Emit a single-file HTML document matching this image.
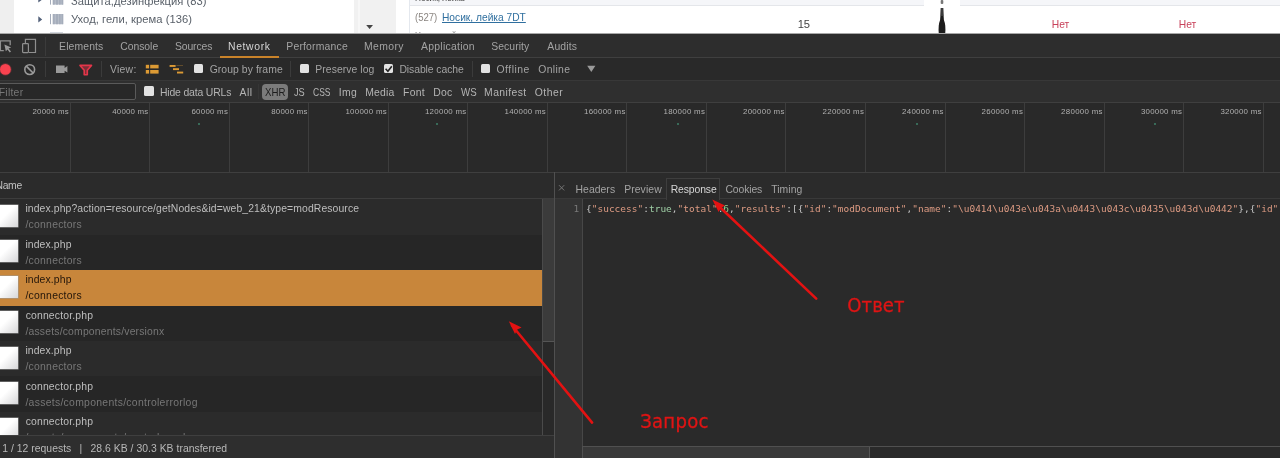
<!DOCTYPE html>
<html lang="ru">
<head>
<meta charset="utf-8">
<title>DevTools Network — Запрос / Ответ</title>
<style>
html,body{margin:0;padding:0}
body{width:1280px;height:458px;overflow:hidden;position:relative;background:#2a2a2a;font-family:"Liberation Sans",sans-serif;font-size:10.4px}
div,i,span,svg{position:absolute;display:block}
.t{white-space:pre;line-height:0}
.t span{position:static;display:inline}
/* ---------- page behind devtools ---------- */
#page{left:0;top:0;width:1280px;height:34px;background:#fff;overflow:hidden}
#pgt{left:0;top:0;width:1280px;height:33px;overflow:hidden;will-change:transform}
#page .strip{left:0;top:0;width:14px;height:34px;background:#efefef}
#page .sb{left:354px;top:0;width:42px;height:34px;background:#f1f1f1}
#page .sb b{position:absolute;left:4px;top:0;width:2px;height:34px;background:#f7f7f7}
#page .th{left:409px;top:0;width:871px;height:5px;background:#f5f6f9;border-bottom:1px solid #e4e6ea}
#page .tl{left:409px;top:0;width:1px;height:34px;background:#e4e8ee}
#page .edge{left:0;top:33px;width:1280px;height:1px;background:#a8a8a8}
/* ---------- devtools ---------- */
#dt{left:0;top:34px;width:1280px;height:424px;background:#2a2a2a;overflow:hidden}
#all{left:0;top:0;width:1280px;height:458px;overflow:hidden;pointer-events:none;will-change:transform}
.bar{left:0;width:1280px}
#tabs{top:34px;height:23px;background:#2d2d2d;border-bottom:1px solid #3f3f3f}
#tool{top:58px;height:22px;background:#292929;border-bottom:1px solid #383838}
#filt{top:81px;height:21px;background:#2f2f2f;border-bottom:1px solid #3f3f3f}
#time{top:103px;height:69px;background:#292929;border-bottom:1px solid #3f3f3f}
.g{top:103px;width:1px;height:69px;background:#3d3d3d}
.dot{width:2px;height:2px;background:#3f8068;border-radius:1px}
.vd{width:1px;background:#3b3b3b}
.cb{width:9.4px;height:9.4px;background:#e2e2e2;border-radius:1.5px}
#und{left:220px;top:56px;width:59px;height:2px;background:#c9832a}
#finp{left:-4px;top:83px;width:138px;height:15px;border:1px solid #5a5a5a;border-radius:2px;background:#282828}
#xhr{left:262px;top:83.5px;width:26px;height:16.5px;background:#7b7b7b;border-radius:4px}
/* left list */
#lhead{left:0;top:173px;width:554px;height:25px;background:#2b2b2b;border-bottom:1px solid #3d3d3d}
.row{left:0;width:542px;height:35.45px;background:#262626}
.row.odd{background:#2b2b2b}
.row.sel{background:#c8863b}
.ic{left:-4px;top:5.6px;width:22px;height:22px;background:linear-gradient(135deg,#fff 0%,#fff 45%,#d6d6d8 100%);box-shadow:0 0 0 .5px #9a9a9a}
#rowt{left:0;top:0;width:542px;height:436px;overflow:hidden;will-change:transform}
#vsb{left:542px;top:199px;width:12px;height:237px;background:#292929;border-left:1px solid #4a4a4a}
#vsb i{left:0;top:0;width:11px;height:142px;background:#3b3b3b;border-bottom:1px solid #555}
#split{left:554px;top:172px;width:1px;height:286px;background:#505050}
#stat{left:0;top:435px;width:554px;height:23px;background:#2e2e2e;border-top:1px solid #3f3f3f}
/* right */
#rhead{left:555px;top:173px;width:725px;height:25px;background:#2b2b2b;border-bottom:1px solid #393939}
#rtab{left:666px;top:178px;width:52px;height:21px;border:1px solid #3e3e3e;border-bottom:0;background:#2a2a2a}
#gut{left:555px;top:199px;width:27px;height:259px;background:#333;border-right:1px solid #474747}
#hsb{left:582px;top:446px;width:698px;height:12px;background:#2a2a2a;border-top:1px solid #505050}
#hsb i{left:0;top:0;width:286px;height:12px;background:#393939;border-right:1px solid #555;border-left:1px solid #505050}
</style>
</head>
<body>
<div id="page">
  <i class="strip"></i>
  <div class="sb"><b></b></div>
  <i class="th"></i><i class="tl"></i>
  <svg width="1280" height="34" viewBox="0 0 1280 34" style="left:0;top:0"><defs><filter id="bl" x="-50%" y="-20%" width="200%" height="140%"><feGaussianBlur stdDeviation="0.5"/></filter></defs>
    <!-- tree arrows -->
    <path d="M38.3 -3.5 L42.2 -0.4 L38.3 2.6Z M38.3 16.3 L42.2 19.4 L38.3 22.5Z" fill="#53617a"/>
    <!-- barcode-like icons -->
    <g fill="#a5adbb">
      <rect x="50" y="-6" width="1" height="10.6"/><rect x="52.6" y="-6" width="10.6" height="10.6" opacity=".82"/><rect x="53" y="-6" width="1.6" height="10.6"/><rect x="56" y="-6" width="2" height="10.6"/><rect x="59" y="-6" width="1.6" height="10.6"/><rect x="61.6" y="-6" width="1.6" height="10.6"/>
      <rect x="50" y="14" width="1" height="10.2"/><rect x="52.6" y="14" width="10.6" height="10.2" opacity=".82"/><rect x="53" y="14" width="1.6" height="10.2"/><rect x="56" y="14" width="2" height="10.2"/><rect x="59" y="14" width="1.6" height="10.2"/><rect x="61.6" y="14" width="1.6" height="10.2"/>
      <rect x="50" y="32.3" width="13" height="2" opacity=".7"/>
    </g>
    <path d="M366.2 24.9 L373 24.9 L369.6 28.9Z" fill="#444"/>
    <!-- product thumbnail -->
    <rect x="924" y="0" width="36" height="6" fill="#fff"/><rect x="940.7" y="0" width="2.6" height="4" rx="1" fill="#777"/>
    <g filter="url(#bl)"><path d="M940.9 8 L943.1 8 L943.9 20 Q946 25 945.2 34 L938.8 34 Q938 25 940.1 20Z" fill="#1c1a1a"/><rect x="940.4" y="8" width="3.2" height="8" fill="#555" opacity=".55"/></g>
  </svg>
  <i class="edge"></i>
</div>
<div id="pgt">
<span class="t" style="left:70.95px;top:1px;font-size:11.2px;letter-spacing:0.036px;color:#596069;">Защита,дезинфекция (83)</span>
<span class="t" style="left:70.95px;top:19px;font-size:11.2px;letter-spacing:0.055px;color:#596069;">Уход, гели, крема (136)</span>
<span class="t" style="left:415.3px;top:-2px;font-size:9.5px;letter-spacing:0px;color:#444;transform:scaleX(0.8643);transform-origin:0 50%;">Носик, лейка</span>
<span class="t" style="left:414.87px;top:17px;font-size:10.6px;letter-spacing:0px;color:#8a8580;transform:scaleX(0.9011);transform-origin:0 50%;">(527)</span>
<span class="t" style="left:441.85px;top:17px;font-size:11.2px;letter-spacing:0px;color:#2f6f9f;text-decoration:underline;transform:scaleX(0.9125);transform-origin:0 50%;">Носик, лейка 7DT</span>
<span class="t" style="left:415.3px;top:35px;font-size:9.5px;letter-spacing:0px;color:#666;transform:scaleX(0.8643);transform-origin:0 50%;">Носик, лейка</span>
<span class="t" style="left:797.7px;top:24px;font-size:11.2px;letter-spacing:-0.2px;color:#444;">15</span>
<span class="t" style="left:1051.7px;top:25px;font-size:10.3px;letter-spacing:0.025px;color:#c8415a;">Нет</span>
<span class="t" style="left:1178.7px;top:25px;font-size:10.3px;letter-spacing:0.025px;color:#c8415a;">Нет</span>
</div>
<div id="tabs" class="bar"></div>
<div id="tool" class="bar"></div>
<div id="filt" class="bar"></div>
<div id="time" class="bar"></div>
<i class="g" style="left:69.80px"></i><i class="g" style="left:149.32px"></i><i class="g" style="left:228.84px"></i><i class="g" style="left:308.36px"></i><i class="g" style="left:387.88px"></i><i class="g" style="left:467.40px"></i><i class="g" style="left:546.92px"></i><i class="g" style="left:626.44px"></i><i class="g" style="left:705.96px"></i><i class="g" style="left:785.48px"></i><i class="g" style="left:865.00px"></i><i class="g" style="left:944.52px"></i><i class="g" style="left:1024.04px"></i><i class="g" style="left:1103.56px"></i><i class="g" style="left:1183.08px"></i><i class="g" style="left:1262.60px"></i>
<i class="dot" style="left:197.5px;top:123px"></i><i class="dot" style="left:436px;top:123px"></i><i class="dot" style="left:677px;top:123px"></i><i class="dot" style="left:915.5px;top:123px"></i><i class="dot" style="left:1154.3px;top:123px"></i>
<i id="und"></i>
<i class="vd" style="left:45px;top:37px;height:19px"></i>
<i class="vd" style="left:45px;top:61px;height:16px"></i>
<i class="vd" style="left:101px;top:61px;height:16px"></i>
<i class="vd" style="left:290px;top:61px;height:16px"></i>
<i class="vd" style="left:471.5px;top:61px;height:16px"></i>
<i class="vd" style="left:258px;top:84px;height:15px;background:#363636"></i>
<i class="cb" style="left:193.7px;top:64px"></i>
<i class="cb" style="left:300.1px;top:64px"></i>
<i class="cb" style="left:383.8px;top:64px"></i>
<i class="cb" style="left:480.6px;top:64px"></i>
<i class="cb" style="left:144.3px;top:86.3px"></i>
<div id="finp"></div>
<i id="xhr"></i>
<svg id="icons" width="620" height="50" viewBox="0 33 620 50" style="left:0;top:33px">
  <!-- inspect -->
  <path d="M10.2 45.2 V40.9 H0.4 V50.6 H3.8" fill="none" stroke="#8f8f8f" stroke-width="1.3"/>
  <path d="M4.4 44.6 L11.2 47.6 L8.6 48.5 L11 51.6 L9.8 52.4 L7.5 49.4 L5.8 51.3Z" fill="#9a9a9a"/>
  <!-- device -->
  <path d="M25.4 43.5 V39.4 H35.5 V52.5 H28.8" fill="none" stroke="#8f8f8f" stroke-width="1.2"/>
  <rect x="22.6" y="43.6" width="5.8" height="9" rx=".8" fill="none" stroke="#8f8f8f" stroke-width="1.2"/>
  <!-- record -->
  <circle cx="5.4" cy="69.4" r="6.3" fill="#f8404e" opacity=".25"/><circle cx="5.4" cy="69.4" r="5.4" fill="#f8424f"/>
  <!-- clear -->
  <circle cx="29.7" cy="69.6" r="4.9" fill="none" stroke="#9a9a9a" stroke-width="1.6"/>
  <path d="M26.3 66.2 L33.1 73" stroke="#9a9a9a" stroke-width="1.7"/>
  <!-- camera -->
  <path d="M56 65.5 H64.6 V67.9 L67.4 66 V72.6 L64.6 70.7 V73 H56Z" fill="#9a9a9a"/>
  <!-- filter -->
  <path d="M80 65.4 H91.5 L87.3 70.2 V74.8 H84.2 V70.2Z" fill="#e3364a" fill-opacity=".45" stroke="#e3364a" stroke-width="1.6" stroke-linejoin="round"/>
  <!-- large rows -->
  <g fill="#dc9a34"><rect x="145.8" y="64.8" width="3.3" height="3.6"/><rect x="150.2" y="64.8" width="8.4" height="3.6"/><rect x="145.8" y="70" width="3.3" height="3.6"/><rect x="150.2" y="70" width="8.4" height="3.6"/></g>
  <!-- waterfall -->
  <g fill="#dc9a34"><rect x="169.6" y="65" width="6" height="1.9"/><rect x="173" y="68.2" width="6" height="1.9"/><rect x="177" y="71.6" width="6.2" height="1.9"/><rect x="176.4" y="65" width="6.6" height=".7" opacity=".45"/></g>
  <!-- check -->
  <path d="M385.6 68.8 L387.9 71.3 L391.8 66.2" fill="none" stroke="#222" stroke-width="1.6"/>
  <!-- dropdown -->
  <path d="M587.2 65.7 H595.4 L591.3 71.9Z" fill="#9a9a9a"/>
</svg>
<div id="lhead"></div>
<div class="row odd" style="top:199px;height:36px"><i class="ic" style="top:5.8px"></i></div>
<div class="row" style="top:235px;height:35px"><i class="ic" style="top:5.3px"></i></div>
<div class="row sel" style="top:270px;height:36px"><i class="ic" style="top:5.8px"></i></div>
<div class="row" style="top:306px;height:35px"><i class="ic" style="top:5.2px"></i></div>
<div class="row odd" style="top:341px;height:35px"><i class="ic" style="top:5.6px"></i></div>
<div class="row" style="top:376px;height:36px"><i class="ic" style="top:6.1px"></i></div>
<div class="row odd" style="top:412px;height:35px"><i class="ic" style="top:5.6px"></i></div>
<div id="rowt">
<span class="t" style="left:25.4px;top:209px;font-size:10.4px;letter-spacing:0.106px;color:#bebebe;">index.php?action=resource/getNodes&amp;id=web_21&amp;type=modResource</span>
<span class="t" style="left:25.45px;top:225px;font-size:10.4px;letter-spacing:0.255px;color:#777777;">/connectors</span>
<span class="t" style="left:25.4px;top:245px;font-size:10.4px;letter-spacing:0.119px;color:#bebebe;">index.php</span>
<span class="t" style="left:25.45px;top:261px;font-size:10.4px;letter-spacing:0.255px;color:#777777;">/connectors</span>
<span class="t" style="left:25.4px;top:280px;font-size:10.4px;letter-spacing:0.119px;color:#22150a;">index.php</span>
<span class="t" style="left:25.45px;top:296px;font-size:10.4px;letter-spacing:0.255px;color:#22150a;">/connectors</span>
<span class="t" style="left:25.65px;top:316px;font-size:10.4px;letter-spacing:0.175px;color:#bebebe;">connector.php</span>
<span class="t" style="left:25.45px;top:332px;font-size:10.4px;letter-spacing:0.185px;color:#777777;">/assets/components/versionx</span>
<span class="t" style="left:25.4px;top:351px;font-size:10.4px;letter-spacing:0.119px;color:#bebebe;">index.php</span>
<span class="t" style="left:25.45px;top:367px;font-size:10.4px;letter-spacing:0.255px;color:#777777;">/connectors</span>
<span class="t" style="left:25.65px;top:387px;font-size:10.4px;letter-spacing:0.175px;color:#bebebe;">connector.php</span>
<span class="t" style="left:25.45px;top:403px;font-size:10.4px;letter-spacing:0.294px;color:#777777;">/assets/components/controlerrorlog</span>
<span class="t" style="left:25.65px;top:422px;font-size:10.4px;letter-spacing:0.175px;color:#bebebe;">connector.php</span>
<span class="t" style="left:25.45px;top:438px;font-size:10.4px;letter-spacing:0.294px;color:#777777;">/assets/components/controlerrorlog</span>
</div>
<div id="vsb"><i></i></div>
<div id="stat"></div>
<div id="rhead"></div>
<div id="rtab"></div>
<div id="gut"></div>
<div id="hsb"><i></i></div>
<i id="split"></i>
<svg width="14" height="14" viewBox="0 0 14 14" style="left:555px;top:181px"><path d="M4 4.2 L9.2 9.4 M9.2 4.2 L4 9.4" stroke="#767676" stroke-width="1" fill="none"/></svg>
<div id="all">
<span class="t" style="left:59.1px;top:47px;font-size:10.4px;letter-spacing:0.129px;color:#a3a3a3;">Elements</span>
<span class="t" style="left:120.25px;top:47px;font-size:10.4px;letter-spacing:-0.033px;color:#a3a3a3;">Console</span>
<span class="t" style="left:174.95px;top:47px;font-size:10.4px;letter-spacing:-0.117px;color:#a3a3a3;">Sources</span>
<span class="t" style="left:228.1px;top:47px;font-size:10.4px;letter-spacing:0.617px;color:#d6d6d6;">Network</span>
<span class="t" style="left:286.3px;top:47px;font-size:10.4px;letter-spacing:0.19px;color:#a3a3a3;">Performance</span>
<span class="t" style="left:364.1px;top:47px;font-size:10.4px;letter-spacing:0.36px;color:#a3a3a3;">Memory</span>
<span class="t" style="left:421.05px;top:47px;font-size:10.4px;letter-spacing:0.27px;color:#a3a3a3;">Application</span>
<span class="t" style="left:491.15px;top:47px;font-size:10.4px;letter-spacing:0.079px;color:#a3a3a3;">Security</span>
<span class="t" style="left:547.35px;top:47px;font-size:10.4px;letter-spacing:0.15px;color:#a3a3a3;">Audits</span>
<span class="t" style="left:110.0px;top:70px;font-size:10.4px;letter-spacing:0.263px;color:#a3a3a3;">View:</span>
<span class="t" style="left:209.65px;top:70px;font-size:10.4px;letter-spacing:0.069px;color:#a3a3a3;">Group by frame</span>
<span class="t" style="left:315.3px;top:70px;font-size:10.4px;letter-spacing:0.064px;color:#a3a3a3;">Preserve log</span>
<span class="t" style="left:399.4px;top:70px;font-size:10.4px;letter-spacing:-0.071px;color:#a3a3a3;">Disable cache</span>
<span class="t" style="left:496.55px;top:70px;font-size:10.4px;letter-spacing:0.492px;color:#a3a3a3;">Offline</span>
<span class="t" style="left:538.35px;top:70px;font-size:10.4px;letter-spacing:0.31px;color:#a3a3a3;">Online</span>
<span class="t" style="left:-1.3px;top:93px;font-size:10.4px;letter-spacing:0.26px;color:#777;">Filter</span>
<span class="t" style="left:159.9px;top:93px;font-size:10.4px;letter-spacing:-0.146px;color:#b4b4b4;">Hide data URLs</span>
<span class="t" style="left:239.45px;top:93px;font-size:10.4px;letter-spacing:0.575px;color:#b4b4b4;">All</span>
<span class="t" style="left:293.98px;top:93px;font-size:10.4px;letter-spacing:0px;color:#b4b4b4;transform:scaleX(0.887);transform-origin:0 50%;">JS</span>
<span class="t" style="left:313.34px;top:93px;font-size:10.4px;letter-spacing:0px;color:#b4b4b4;transform:scaleX(0.8171);transform-origin:0 50%;">CSS</span>
<span class="t" style="left:338.85px;top:93px;font-size:10.4px;letter-spacing:0.325px;color:#b4b4b4;">Img</span>
<span class="t" style="left:365.3px;top:93px;font-size:10.4px;letter-spacing:0.162px;color:#b4b4b4;">Media</span>
<span class="t" style="left:403.1px;top:93px;font-size:10.4px;letter-spacing:0.283px;color:#b4b4b4;">Font</span>
<span class="t" style="left:433.3px;top:93px;font-size:10.4px;letter-spacing:0.225px;color:#b4b4b4;">Doc</span>
<span class="t" style="left:460.82px;top:93px;font-size:10.4px;letter-spacing:0px;color:#b4b4b4;transform:scaleX(0.9344);transform-origin:0 50%;">WS</span>
<span class="t" style="left:484.1px;top:93px;font-size:10.4px;letter-spacing:0.414px;color:#b4b4b4;">Manifest</span>
<span class="t" style="left:534.65px;top:93px;font-size:10.4px;letter-spacing:0.525px;color:#b4b4b4;">Other</span>
<span class="t" style="left:265.02px;top:93px;font-size:10.4px;letter-spacing:0px;color:#1c1c1c;transform:scaleX(0.9294);transform-origin:0 50%;">XHR</span>
<span class="t" style="left:32.45px;top:112px;font-size:7.9px;letter-spacing:0.243px;color:#b0b0b0;">20000 ms</span>
<span class="t" style="left:112.22px;top:112px;font-size:7.9px;letter-spacing:0.207px;color:#b0b0b0;">40000 ms</span>
<span class="t" style="left:191.49px;top:112px;font-size:7.9px;letter-spacing:0.243px;color:#b0b0b0;">60000 ms</span>
<span class="t" style="left:271.26px;top:112px;font-size:7.9px;letter-spacing:0.207px;color:#b0b0b0;">80000 ms</span>
<span class="t" style="left:345.43px;top:112px;font-size:7.9px;letter-spacing:0.287px;color:#b0b0b0;">100000 ms</span>
<span class="t" style="left:424.95px;top:112px;font-size:7.9px;letter-spacing:0.287px;color:#b0b0b0;">120000 ms</span>
<span class="t" style="left:504.47px;top:112px;font-size:7.9px;letter-spacing:0.287px;color:#b0b0b0;">140000 ms</span>
<span class="t" style="left:583.99px;top:112px;font-size:7.9px;letter-spacing:0.287px;color:#b0b0b0;">160000 ms</span>
<span class="t" style="left:663.51px;top:112px;font-size:7.9px;letter-spacing:0.287px;color:#b0b0b0;">180000 ms</span>
<span class="t" style="left:743.03px;top:112px;font-size:7.9px;letter-spacing:0.287px;color:#b0b0b0;">200000 ms</span>
<span class="t" style="left:822.55px;top:112px;font-size:7.9px;letter-spacing:0.287px;color:#b0b0b0;">220000 ms</span>
<span class="t" style="left:902.07px;top:112px;font-size:7.9px;letter-spacing:0.287px;color:#b0b0b0;">240000 ms</span>
<span class="t" style="left:981.59px;top:112px;font-size:7.9px;letter-spacing:0.287px;color:#b0b0b0;">260000 ms</span>
<span class="t" style="left:1061.11px;top:112px;font-size:7.9px;letter-spacing:0.287px;color:#b0b0b0;">280000 ms</span>
<span class="t" style="left:1140.88px;top:112px;font-size:7.9px;letter-spacing:0.256px;color:#b0b0b0;">300000 ms</span>
<span class="t" style="left:1220.4px;top:112px;font-size:7.9px;letter-spacing:0.256px;color:#b0b0b0;">320000 ms</span>
<span class="t" style="left:-4.6px;top:186px;font-size:10.4px;letter-spacing:-0.283px;color:#c0c0c0;">Name</span>
<span class="t" style="left:2.3px;top:449px;font-size:10.4px;letter-spacing:0.014px;color:#b8b8b8;">1 / 12 requests</span>
<span class="t" style="left:79.45px;top:449px;font-size:10.4px;letter-spacing:0px;color:#b8b8b8;">|</span>
<span class="t" style="left:90.55px;top:449px;font-size:10.4px;letter-spacing:0.025px;color:#b8b8b8;">28.6 KB / 30.3 KB transferred</span>
<span class="t" style="left:575.5px;top:190px;font-size:10.4px;letter-spacing:0.05px;color:#a3a3a3;">Headers</span>
<span class="t" style="left:624.2px;top:190px;font-size:10.4px;letter-spacing:0.083px;color:#a3a3a3;">Preview</span>
<span class="t" style="left:670.7px;top:190px;font-size:10.4px;letter-spacing:-0.107px;color:#d6d6d6;">Response</span>
<span class="t" style="left:725.45px;top:190px;font-size:10.4px;letter-spacing:-0.117px;color:#a3a3a3;">Cookies</span>
<span class="t" style="left:771.2px;top:190px;font-size:10.4px;letter-spacing:0.07px;color:#a3a3a3;">Timing</span>
<span class="t" style="left:573.4px;top:209px;font-size:9.45px;letter-spacing:0px;color:#7a7a7a;font-family:'DejaVu Sans Mono', 'Liberation Mono', monospace;">1</span>
<span class="t" style="left:847.35px;top:305px;font-size:20.1px;letter-spacing:0.025px;color:#e01414;font-family:'DejaVu Sans Condensed', 'DejaVu Sans', sans-serif;-webkit-text-stroke:.3px #e01414;">Ответ</span>
<span class="t" style="left:640.15px;top:421px;font-size:20.1px;letter-spacing:0.27px;color:#e01414;font-family:'DejaVu Sans Condensed', 'DejaVu Sans', sans-serif;-webkit-text-stroke:.3px #e01414;">Запрос</span>
<div class="t code" style="left:586.0px;top:209px;font-family:'DejaVu Sans Mono','Liberation Mono',monospace;font-size:9.45px;letter-spacing:0.0381px"><span style="color:#c8c8c8">{</span><span style="color:#dc9a82">&quot;success&quot;</span><span style="color:#c8c8c8">:</span><span style="color:#9fcfa6">true</span><span style="color:#c8c8c8">,</span><span style="color:#dc9a82">&quot;total&quot;</span><span style="color:#c8c8c8">:</span><span style="color:#8fd68f">6</span><span style="color:#c8c8c8">,</span><span style="color:#dc9a82">&quot;results&quot;</span><span style="color:#c8c8c8">:[{</span><span style="color:#dc9a82">&quot;id&quot;</span><span style="color:#c8c8c8">:</span><span style="color:#dc9a82">&quot;modDocument&quot;</span><span style="color:#c8c8c8">,</span><span style="color:#dc9a82">&quot;name&quot;</span><span style="color:#c8c8c8">:</span><span style="color:#dc9a82">&quot;\u0414\u043e\u043a\u0443\u043c\u0435\u043d\u0442&quot;</span><span style="color:#c8c8c8">},{</span><span style="color:#dc9a82">&quot;id&quot;</span><span style="color:#c8c8c8">:</span><span style="color:#dc9a82">&quot;modResource&quot;</span><span style="color:#c8c8c8">,</span><span style="color:#dc9a82">&quot;name&quot;</span></div>
<svg width="1280" height="458" viewBox="0 0 1280 458" style="left:0;top:0">
  <g stroke="#e31212" stroke-width="2.6" stroke-linecap="round" fill="none">
    <path d="M816.2 298.6 L716 203.5"/>
    <path d="M592.1 422.6 L512 325.5"/>
  </g>
  <path d="M712.3 199.6 L725.0 205.6 L721.0 207.9 L718.6 212.0Z" fill="#e31212"/>
  <path d="M508.8 321.3 L521.6 327.6 L517.3 329.6 L515.0 334.0Z" fill="#e31212"/>
</svg>
</div>
</body>
</html>
